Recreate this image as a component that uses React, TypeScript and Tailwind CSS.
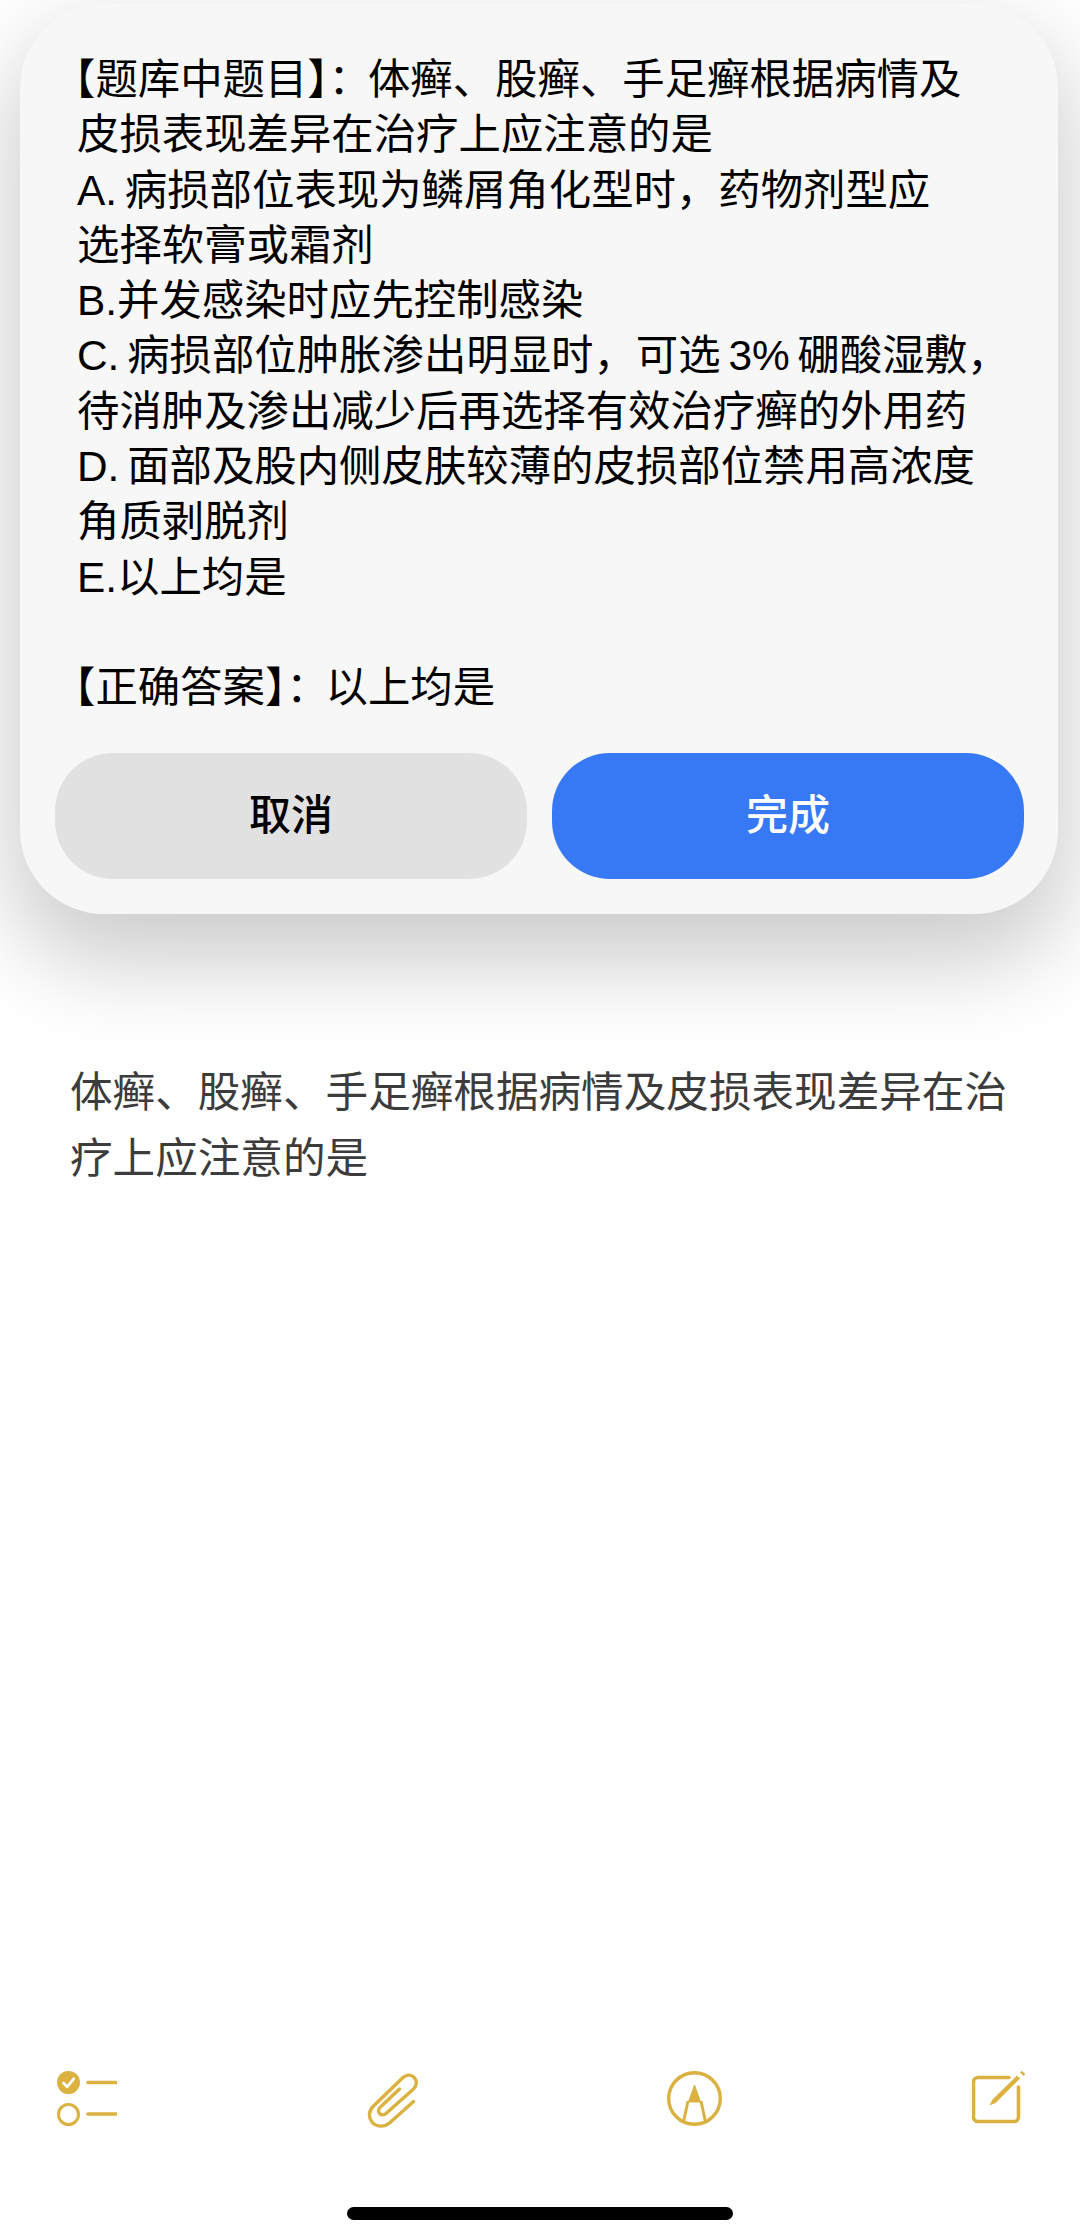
// Notes app with the question edit dialog on top
const GOLD = '#dbb13f'

const dialogLines = [
  '【题库中题目】：体癣、股癣、手足癣根据病情及',
  '皮损表现差异在治疗上应注意的是',
  'A. 病损部位表现为鳞屑角化型时，药物剂型应',
  '选择软膏或霜剂',
  'B.并发感染时应先控制感染',
  'C. 病损部位肿胀渗出明显时，可选 3% 硼酸湿敷，',
  '待消肿及渗出减少后再选择有效治疗癣的外用药',
  'D. 面部及股内侧皮肤较薄的皮损部位禁用高浓度',
  '角质剥脱剂',
  'E.以上均是',
  '\u00a0',
  '【正确答案】：以上均是',
]

function ChecklistIcon() {
  return (
    <svg width="60" height="57" viewBox="0 0 60 57" fill="none">
      <circle cx="11.5" cy="11.5" r="11.5" fill={GOLD} />
      <path d="M6.5 12l3.6 3.8 6.6-8" stroke="#fff" strokeWidth="2.8" strokeLinecap="round" strokeLinejoin="round" />
      <circle cx="11.5" cy="43.5" r="10" stroke={GOLD} strokeWidth="3" />
      <path d="M31 11.5h28M31 43h28" stroke={GOLD} strokeWidth="3.6" strokeLinecap="round" />
    </svg>
  )
}

function PaperclipIcon() {
  return (
    <svg width="51" height="57" viewBox="0 0 51 57" fill="none">
      <path
        d="M46.5 30.5L22.5 52c-5.800 4.600-13.500 4-17.500-1-4-5-3.200-11.500 1.500-16L36 6.500c3.800-3.300 8.700-3 11.500.3 2.800 3.300 2.300 8-1 11.200L19 42.500c-2 1.800-4.800 1.800-6.400 0-1.600-1.800-1.300-4.500.6-6.300L32.500 18"
        stroke={GOLD}
        strokeWidth="3.4"
        strokeLinecap="round"
        strokeLinejoin="round"
      />
    </svg>
  )
}

function MarkupIcon() {
  return (
    <svg width="55" height="55" viewBox="0 0 55 55" fill="none">
      <circle cx="27.5" cy="27.5" r="25.8" stroke={GOLD} strokeWidth="3.4" />
      <path d="M27.5 14l6 17h-12z" fill={GOLD} stroke={GOLD} strokeWidth="1" strokeLinejoin="round" />
      <path d="M21 30l-4.500 21M34 30l4.500 21" stroke={GOLD} strokeWidth="3" />
    </svg>
  )
}

function ComposeIcon() {
  return (
    <svg width="54" height="54" viewBox="0 0 54 54" fill="none">
      <path
        d="M37 7.500H6c-2.500 0-4.500 2-4.500 4.500v35c0 2.500 2 4.500 4.500 4.500h36c2.500 0 4.500-2 4.500-4.500V17"
        stroke={GOLD}
        strokeWidth="3.6"
        strokeLinecap="round"
      />
      <path d="M17.5 35.5l3-6L45 5.500l3 3L23.500 33z" fill={GOLD} />
      <path d="M48.500 2.300l1.400-1 2.800 2.800-1 1.500z" fill={GOLD} stroke={GOLD} strokeWidth="1" />
    </svg>
  )
}

function DialogLine({ text }: { text: string }) {
  if (!text.startsWith('【')) return <div>{text}</div>
  // the colon after the bracket sits tighter in the reference
  const [label, rest] = text.split('：')
  return (
    <div className="-ml-[24px]">
      {label}
      <span className="-mr-[3px]">：</span>
      {rest}
    </div>
  )
}

export default function App() {
  return (
    <div
      className="w-[1080px] h-[2240px] bg-white overflow-hidden flex flex-col"
      style={{ fontFamily: '"Liberation Sans", "Noto Sans CJK SC", sans-serif' }}
    >
      <div className="mt-[4px] ml-[20px] w-[1038px] h-[910px] shrink-0 rounded-[84px] bg-[#f7f7f7] shadow-[0_40px_90px_10px_rgba(0,0,0,0.2)] flex flex-col pt-[48px]">
        <div className="pl-[57px] text-[42.4px] leading-[55.3px] [word-spacing:-4px] text-black whitespace-nowrap">
          {dialogLines.map((line, i) => (
            <DialogLine key={i} text={line} />
          ))}
        </div>
        <div className="mt-[37px] ml-[35px] flex gap-[25px]">
          <button className="w-[472px] h-[126px] rounded-[58px] bg-[#e1e1e1] text-[42px] font-medium text-black">
            取消
          </button>
          <button className="w-[472px] h-[126px] rounded-[58px] bg-[#3779f5] text-[42px] font-medium text-white">
            完成
          </button>
        </div>
      </div>

      <div className="mt-[146px] pl-[70px] text-[42.6px] leading-[65.5px] text-[#3c3c3c] whitespace-nowrap">
        <div>体癣、股癣、手足癣根据病情及皮损表现差异在治</div>
        <div>疗上应注意的是</div>
      </div>

      <div className="flex-1" />

      <div className="pl-[57px] pr-[54px] flex justify-between items-start">
        <ChecklistIcon />
        <PaperclipIcon />
        <MarkupIcon />
        <div className="-mt-[1px]">
          <ComposeIcon />
        </div>
      </div>
      <div className="mt-[79px] mb-[20px] mx-auto w-[386px] h-[13px] rounded-full bg-black" />
    </div>
  )
}
